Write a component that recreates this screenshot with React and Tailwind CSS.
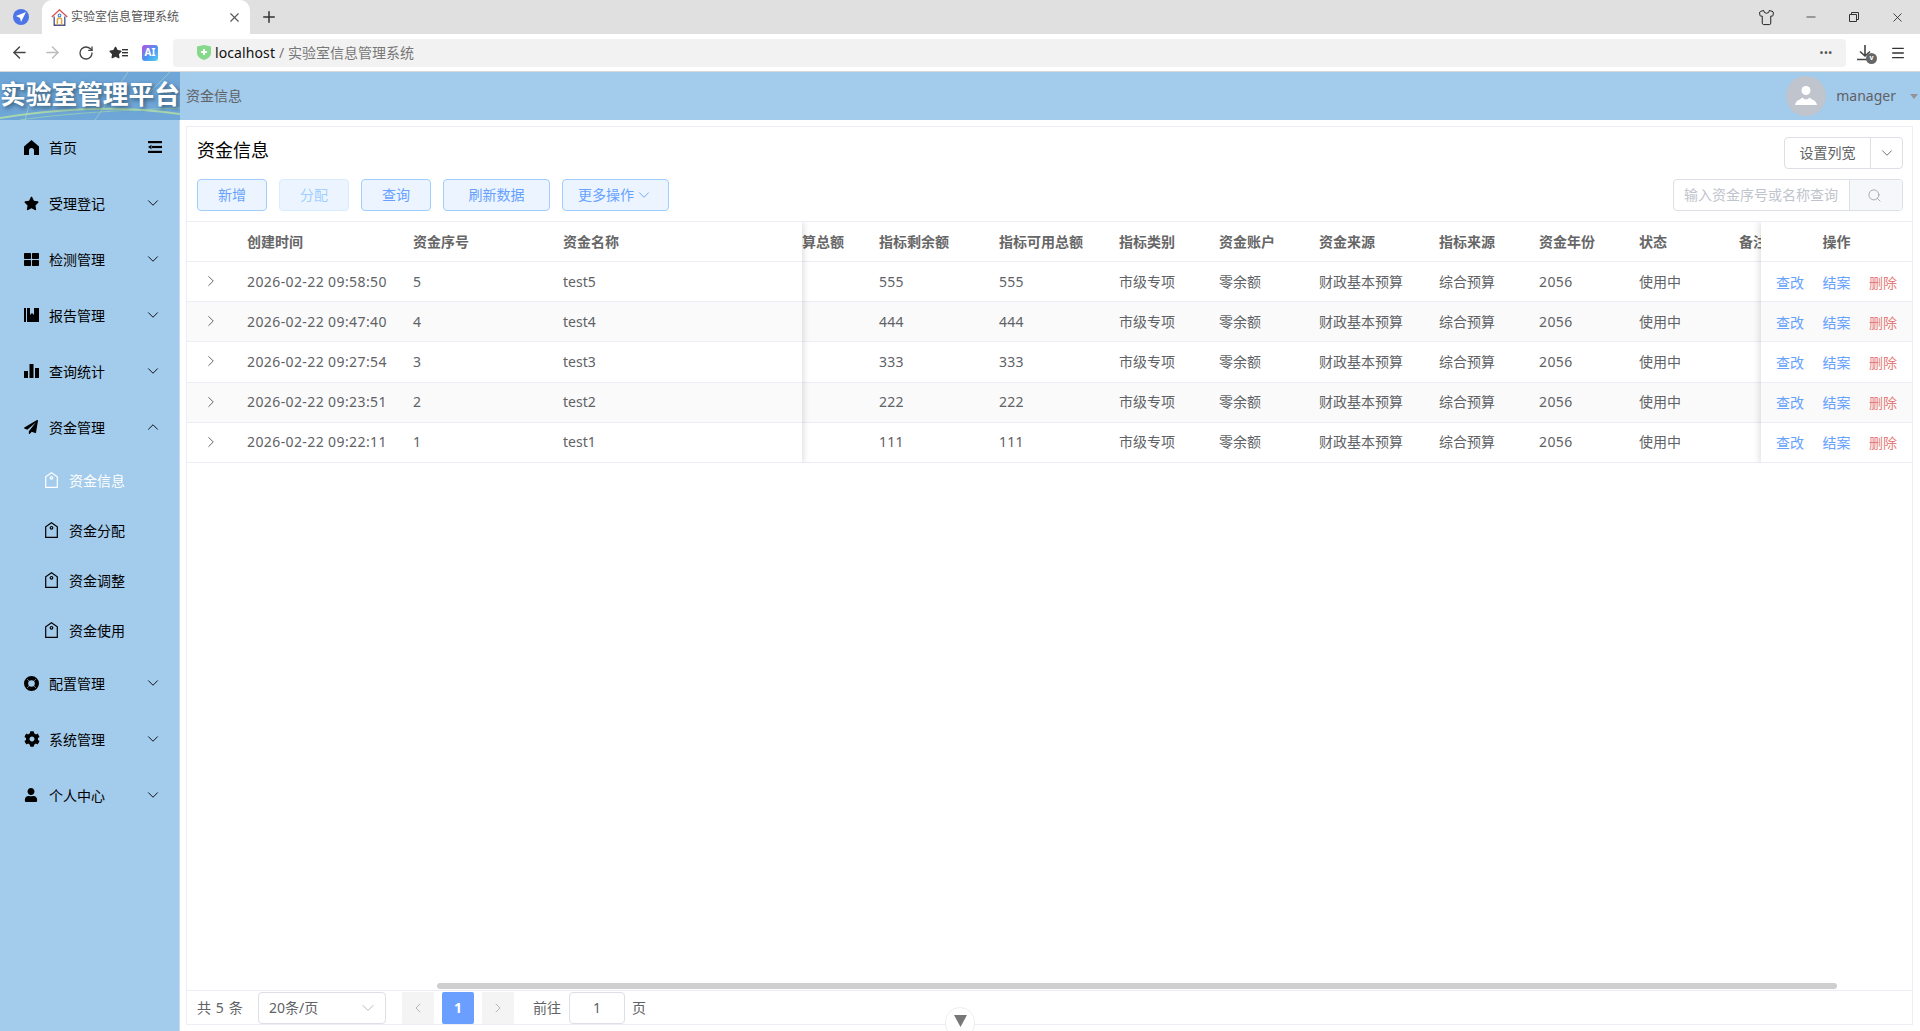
import React from 'react';
import { FaStar, FaThLarge, FaPaperPlane, FaCog, FaUser } from 'react-icons/fa';
import { ChevronDown, ChevronUp, ChevronRight, ChevronLeft, Search, X, Plus, ArrowLeft, ArrowRight, RotateCw, Minus, Menu, Shirt } from 'lucide-react';

const HomeIcon = () => (
    <svg width="15" height="15" viewBox="0 0 15 15" fill="currentColor">
        <path d="M7.500 0 15 6.500V15H10V10.500a2.500 2.500 0 0 0-5 0V15H0V6.500z" />
    </svg>
);

const OutdentIcon = () => (
    <svg width="14" height="12" viewBox="0 0 14 12" fill="currentColor">
        <rect x="0" y="0" width="14" height="2.200" />
        <rect x="4" y="4.900" width="10" height="2.200" />
        <path d="M0 6 3.500 3.800v4.400z" />
        <rect x="0" y="9.800" width="14" height="2.200" />
    </svg>
);

const RingIcon = () => (
    <svg width="15" height="15" viewBox="0 0 15 15" fill="none">
        <circle cx="7.500" cy="7.500" r="5.400" stroke="currentColor" strokeWidth="4.200" />
        <path d="M3 3 5 5M12 3 10 5M3 12 5 10M12 12 10 10" stroke="#5a7186" strokeWidth="1" />
    </svg>
);

const ReportIcon = () => (
    <svg width="15" height="14" viewBox="0 0 15 14" fill="currentColor">
        <rect x="0" y="0" width="2" height="14" />
        <path d="M3 0h3v7l2-2 2 2V0h5v14H3z" />
    </svg>
);

const BarsIcon = () => (
    <svg width="15" height="14" viewBox="0 0 15 14" fill="currentColor">
        <rect x="0" y="7" width="4" height="7" />
        <rect x="5.500" y="0" width="4" height="14" />
        <rect x="11" y="4" width="4" height="10" />
    </svg>
);

const TagIcon = ({ className }) => (
    <svg width="13" height="16" viewBox="0 0 13 16" fill="none" stroke="currentColor" strokeWidth="1.200" className={className}>
        <path d="M.7 15.300V4.800L6.500.8l5.800 4v10.500z" />
        <circle cx="6.500" cy="5.800" r="1.300" />
    </svg>
);

const HouseFavicon = () => (
    <svg width="17" height="17" viewBox="0 0 16 16" fill="none">
        <path d="M.7 7.500 8 .8l7.300 6.700" stroke="#d9534f" strokeWidth="1.300" />
        <path d="M3 7v8.300h10V7" stroke="#3f4f8f" strokeWidth="1.200" />
        <path d="M6 15.300v-4.800a2 2 0 0 1 4 0v4.800" stroke="#e8a33d" strokeWidth="1.400" />
        <circle cx="8" cy="6" r="1.300" stroke="#3f7fd0" strokeWidth="1" />
    </svg>
);

const menu = [
    { label: '受理登记', icon: <FaStar size={15} /> },
    { label: '检测管理', icon: <FaThLarge size={15} /> },
    { label: '报告管理', icon: <ReportIcon /> },
    { label: '查询统计', icon: <BarsIcon /> },
];

const menuAfter = [
    { label: '配置管理', icon: <RingIcon /> },
    { label: '系统管理', icon: <FaCog size={16} /> },
    { label: '个人中心', icon: <FaUser size={14} /> },
];

const subMenu = ['资金信息', '资金分配', '资金调整', '资金使用'];

const rows = [
    { time: '2026-02-22 09:58:50', no: '5', name: 'test5', left: '555', usable: '555' },
    { time: '2026-02-22 09:47:40', no: '4', name: 'test4', left: '444', usable: '444' },
    { time: '2026-02-22 09:27:54', no: '3', name: 'test3', left: '333', usable: '333' },
    { time: '2026-02-22 09:23:51', no: '2', name: 'test2', left: '222', usable: '222' },
    { time: '2026-02-22 09:22:11', no: '1', name: 'test1', left: '111', usable: '111' },
];

const headRow = 'flex h-[40px] items-center border-b border-[#ebeef5] pb-[1px] font-bold text-[#666]';
const bodyRow = 'flex h-[40.2px] items-center border-b border-[#ebeef5] pb-[1px] text-[#606266]';

const MenuItem = ({ icon, label, open }) => (
    <div className="flex h-[56px] items-center pb-[2px] pl-[24px] pr-[17px] text-black">
        <span className="flex w-[25px] shrink-0 items-center">{icon}</span>
        <span className="flex-1">{label}</span>
        {open ? <ChevronUp size={18} strokeWidth={1.200} /> : <ChevronDown size={18} strokeWidth={1.200} />}
    </div>
);

const Sidebar = () => (
    <aside className="w-[180px] shrink-0 border-r border-[#c9ddf2] bg-[#a3cbec] text-[14px]">
        <div className="flex h-[56px] items-center pb-[2px] pl-[24px] pr-[17px] text-black">
            <span className="flex w-[25px] shrink-0 items-center"><HomeIcon /></span>
            <span className="flex-1">首页</span>
            <OutdentIcon />
        </div>
        {menu.map((m) => <MenuItem key={m.label} {...m} />)}
        <MenuItem icon={<FaPaperPlane size={14} />} label="资金管理" open />
        {subMenu.map((s, i) => (
            <div key={s} className={`flex h-[50px] items-center pb-[2px] pl-[45px] ${i === 0 ? 'text-white' : 'text-black'}`}>
                <TagIcon className="mr-[11px]" />
                {s}
            </div>
        ))}
        {menuAfter.map((m) => <MenuItem key={m.label} {...m} />)}
    </aside>
);

const BrowserChrome = () => (
    <div className="shrink-0">
        <div className="flex h-[34px] items-center bg-[#e0e0e0]">
            <div className="flex w-[42px] justify-center">
                <span className="flex h-[16px] w-[16px] items-center justify-center rounded-full bg-[#4b74e6] text-white">
                    <svg width="10" height="10" viewBox="0 0 10 10" fill="currentColor"><path d="M10 0 0 4l4 2 1 4z" /></svg>
                </span>
            </div>
            <div className="flex h-[34px] w-[208px] items-center rounded-t-[10px] bg-white pl-[9px] pr-[8px] text-[12px] text-[#555]">
                <HouseFavicon />
                <span className="ml-[3px] flex-1">实验室信息管理系统</span>
                <X size={15} strokeWidth={1.800} />
            </div>
            <Plus size={18} strokeWidth={2} className="ml-[10px] text-[#333]" />
            <div className="flex-1" />
            <Shirt size={17} strokeWidth={1.400} className="text-[#222]" />
            <Minus size={14} strokeWidth={1.300} className="ml-[29px] text-[#222]" />
            <svg width="10" height="10" viewBox="0 0 10 10" fill="none" stroke="#333" className="ml-[31px]"><path d="M.5 2.500h7v7h-7zM2.500 2.500v-2h7v7h-2" /></svg>
            <X size={15} strokeWidth={1.300} className="ml-[31px] mr-[15px] text-[#222]" />
        </div>
        <div className="flex h-[38px] items-center border-b border-[#d8d8d8] bg-white">
            <ArrowLeft size={19} strokeWidth={1.800} className="ml-[10px] text-[#444]" />
            <ArrowRight size={19} strokeWidth={1.800} className="ml-[14px] text-[#bbb]" />
            <RotateCw size={16} strokeWidth={2} className="ml-[16px] text-[#444]" />
            <span className="ml-[15px] flex items-center text-[#333]">
                <FaStar size={13} />
                <svg width="6" height="8" viewBox="0 0 6 8" fill="currentColor"><rect y="0" width="6" height="1.400" /><rect y="3" width="6" height="1.400" /><rect y="6" width="6" height="1.400" /></svg>
            </span>
            <span className="ml-[14px] flex h-[16px] w-[16px] items-center justify-center rounded-[3px] bg-gradient-to-br from-[#b04ae0] via-[#4a8ef0] to-[#55d4f0] text-[10px] font-bold text-white">AI</span>
            <div className="ml-[15px] flex h-[28px] flex-1 items-center rounded-[4px] bg-[#f2f2f2] pb-[1px] pl-[24px] pr-[13px] text-[14px]">
                <svg width="14" height="15" viewBox="0 0 14 15"><path d="M0 1.500 7 0l7 1.500V8c0 3.500-3.500 6-7 7-3.500-1-7-3.500-7-7z" fill="#86d98a" /><path d="M7 4v6M4 7h6" stroke="#fff" strokeWidth="2" /></svg>
                <span className="ml-[4px] tracking-[0.1px] text-[#111]">localhost</span>
                <span className="ml-[4px] text-[#777]">/ 实验室信息管理系统</span>
                <div className="flex-1" />
                <span className="text-[9px] font-bold leading-none tracking-[1px] text-[#555]">•••</span>
            </div>
            <span className="relative ml-[11px] text-[#444]">
                <svg width="16" height="16" viewBox="0 0 16 16" fill="none" stroke="currentColor" strokeWidth="1.600"><path d="M8 0v11M3 6.500 8 11l5-4.500M0 14.500h13" /></svg>
                <span className="absolute -bottom-[3px] -right-[4px] flex h-[11px] w-[11px] items-center justify-center rounded-full bg-[#666] text-[7px] font-bold text-white">v</span>
            </span>
            <Menu size={16} strokeWidth={2} className="ml-[17px] mr-[14px] text-[#333]" />
        </div>
    </div>
);

const AppHeader = () => (
    <header className="flex h-[48px] shrink-0 items-center bg-[#a3cbec]">
        <div className="relative h-[48px] w-[180px] shrink-0 overflow-hidden bg-[#6fa6d8]">
            <svg className="absolute inset-0" width="180" height="48" viewBox="0 0 180 48" fill="none">
                <path d="M0 46C50 38 110 32 180 42" stroke="#b9e6a0" strokeWidth="2" opacity=".75" />
                <path d="M20 48C60 42 120 38 180 36" stroke="#a6e0a8" strokeWidth="1" opacity=".6" />
                <path d="M95 48 128 0M25 48 30 30M150 20 170 0" stroke="#b9e6c0" strokeWidth="1" opacity=".5" />
            </svg>
            <div className="absolute inset-0 flex items-center justify-center whitespace-nowrap pb-[2px] text-[25.700px] font-bold text-white [text-shadow:2px_2px_4px_rgba(40,70,90,0.8)]">实验室管理平台</div>
        </div>
        <span className="ml-[6px] pb-[2px] text-[14px] text-[#606266]">资金信息</span>
        <div className="flex-1" />
        <span className="flex h-[40px] w-[40px] items-center justify-center rounded-full bg-[#c0c4cc] text-white">
            <svg width="24" height="24" viewBox="0 0 24 24" fill="currentColor"><circle cx="12" cy="6.500" r="4.500" /><path d="M1 21c1-5 5-5 7.500-7.500 2 2.500 5 2.500 7 0C18 16 22 16 23 21z" /></svg>
        </span>
        <span className="ml-[10px] pb-[2px] text-[14px] text-[#606266]">manager</span>
        <span className="ml-[14px] mr-[2px] h-0 w-0 border-x-[4px] border-t-[5px] border-x-transparent border-t-[#909399]" />
    </header>
);

const ToolButton = ({ children, disabled, className = '' }) => (
    <button className={`flex h-[32px] items-center justify-center rounded-[4px] border pb-[1px] ${disabled ? 'border-[#d9ecff] bg-[#ecf5ff] text-[#a0cfff]' : 'border-[#a0cfff] bg-[#ecf5ff] text-[#67a1ff]'} ${className}`}>
        {children}
    </button>
);

const FundTable = () => (
    <div className="flex flex-1 flex-col">
        <div className="flex overflow-hidden border-t border-[#ebeef5]">
            {/* left fixed columns */}
            <div className="z-10 w-[615px] shrink-0 bg-white shadow-[2px_0_6px_rgba(0,0,0,0.12)]">
                <div className={headRow}>
                    <span className="w-[60px]" />
                    <span className="w-[166px]">创建时间</span>
                    <span className="w-[150px]">资金序号</span>
                    <span>资金名称</span>
                </div>
                {rows.map((r, i) => (
                    <div key={r.no} className={`${bodyRow} ${i % 2 ? 'bg-[#fafafa]' : ''}`}>
                        <span className="flex w-[60px] pl-[15px] text-[#555]"><ChevronRight size={18} strokeWidth={1.200} /></span>
                        <span className="w-[166px] tracking-[0.4px]">{r.time}</span>
                        <span className="w-[150px]">{r.no}</span>
                        <span>{r.name}</span>
                    </div>
                ))}
            </div>

            {/* scrolled columns */}
            <div className="min-w-0 flex-1 overflow-hidden">
                <div className="-ml-[14px] w-[1100px]">
                    <div className={headRow}>
                        <span className="w-[91px]">预算总额</span>
                        <span className="w-[120px]">指标剩余额</span>
                        <span className="w-[120px]">指标可用总额</span>
                        <span className="w-[100px]">指标类别</span>
                        <span className="w-[100px]">资金账户</span>
                        <span className="w-[120px]">资金来源</span>
                        <span className="w-[100px]">指标来源</span>
                        <span className="w-[100px]">资金年份</span>
                        <span className="w-[100px]">状态</span>
                        <span>备注</span>
                    </div>
                    {rows.map((r, i) => (
                        <div key={r.no} className={`${bodyRow} ${i % 2 ? 'bg-[#fafafa]' : ''}`}>
                            <span className="w-[91px]" />
                            <span className="w-[120px] tracking-[0.3px]">{r.left}</span>
                            <span className="w-[120px] tracking-[0.3px]">{r.usable}</span>
                            <span className="w-[100px]">市级专项</span>
                            <span className="w-[100px]">零余额</span>
                            <span className="w-[120px]">财政基本预算</span>
                            <span className="w-[100px]">综合预算</span>
                            <span className="w-[100px] tracking-[0.4px]">2056</span>
                            <span className="w-[100px]">使用中</span>
                        </div>
                    ))}
                </div>
            </div>

            {/* right fixed column */}
            <div className="z-10 w-[151px] shrink-0 bg-white shadow-[-2px_0_6px_rgba(0,0,0,0.12)]">
                <div className={`${headRow} justify-center`}>操作</div>
                {rows.map((r, i) => (
                    <div key={r.no} className={`${bodyRow} gap-[18.500px] pl-[15px] pt-[2px] ${i % 2 ? 'bg-[#fafafa]' : ''}`}>
                        <span className="text-[#67a1ff]">查改</span>
                        <span className="text-[#67a1ff]">结案</span>
                        <span className="text-[#e67a7a]">删除</span>
                    </div>
                ))}
            </div>
        </div>

        <div className="mb-[1px] mr-[75px] mt-auto h-[6px] w-[1400px] self-end rounded-full bg-[#cfcfcf]" />
    </div>
);

const Pager = () => (
    <div className="flex h-[34px] shrink-0 items-center border-t border-[#ebeef5] pl-[10px] text-[#606266]">
        <span className="w-[61px] pb-[1px] tracking-[0.6px]">共 5 条</span>
        <div className="flex h-[32px] w-[128px] items-center justify-between rounded-[4px] border border-[#dcdfe6] pl-[10px] pr-[7px]">
            <span className="pb-[1px]">20条/页</span>
            <ChevronDown size={20} strokeWidth={1} className="text-[#a8abb2]" />
        </div>
        <span className="ml-[16px] flex h-[32px] w-[32px] items-center justify-center rounded-[2px] bg-[#f4f4f5] text-[#a8abb2]"><ChevronLeft size={16} strokeWidth={1.300} /></span>
        <span className="ml-[8px] flex h-[32px] w-[32px] items-center justify-center rounded-[2px] bg-[#6a9fff] font-bold text-white">1</span>
        <span className="ml-[8px] flex h-[32px] w-[32px] items-center justify-center rounded-[2px] bg-[#f4f4f5] text-[#a8abb2]"><ChevronRight size={16} strokeWidth={1.300} /></span>
        <span className="ml-[19px] pb-[1px]">前往</span>
        <span className="ml-[8px] flex h-[32px] w-[56px] items-center justify-center rounded-[4px] border border-[#dcdfe6]">1</span>
        <span className="ml-[7px] pb-[1px]">页</span>
    </div>
);

export default function App() {
    return (
        <div className="relative flex h-[1031px] w-[1920px] flex-col overflow-hidden bg-white text-[14px] font-['Noto_Sans','Noto_Sans_CJK_SC',sans-serif]">
            <BrowserChrome />
            <AppHeader />
            <div className="flex min-h-0 flex-1">
                <Sidebar />
                <main className="flex min-w-0 flex-1 flex-col pb-[6px] pl-[6px] pr-[7px] pt-[6px]">
                    <div className="flex min-h-0 flex-1 flex-col border border-[#ebeef5] bg-white">
                        <div className="flex shrink-0 justify-between pl-[10px] pr-[9px] pt-[10px]">
                            <h1 className="text-[18px] font-normal leading-[26px] text-black">资金信息</h1>
                            <div className="flex h-[32px] w-[119px] rounded-[4px] border border-[#dcdfe6] text-[#606266]">
                                <span className="flex flex-1 items-center justify-center border-r border-[#dcdfe6] pb-[1px]">设置列宽</span>
                                <span className="flex w-[31px] items-center justify-center"><ChevronDown size={18} strokeWidth={1.200} /></span>
                            </div>
                        </div>
                        <div className="flex shrink-0 items-center gap-[12px] pb-[10px] pl-[10px] pr-[9px] pt-[10px]">
                            <ToolButton className="w-[70px]">新增</ToolButton>
                            <ToolButton disabled className="w-[70px]">分配</ToolButton>
                            <ToolButton className="w-[70px]">查询</ToolButton>
                            <ToolButton className="w-[107px]">刷新数据</ToolButton>
                            <ToolButton className="w-[107px] gap-[1px]">更多操作 <ChevronDown size={18} strokeWidth={1.200} /></ToolButton>
                            <div className="ml-auto flex h-[32px] w-[230px] rounded-[4px] border border-[#dcdfe6]">
                                <span className="flex flex-1 items-center border-r border-[#dcdfe6] pb-[1px] pl-[10px] text-[#c0c4cc]">输入资金序号或名称查询</span>
                                <span className="flex w-[52px] items-center justify-center rounded-r-[4px] bg-[#f5f7fa] pr-[4px] text-[#909399]"><Search size={15} strokeWidth={1.200} /></span>
                            </div>
                        </div>
                        <FundTable />
                        <Pager />
                    </div>
                </main>
            </div>

            {/* vue devtools handle */}
            <div className="absolute bottom-[-8px] left-[945px] flex h-[32px] w-[30px] items-start justify-center rounded-full border border-[#eee] bg-white pt-[7px]">
                <svg width="13" height="12" viewBox="0 0 13 12"><path d="M0 0h13L6.500 12z" fill="#777" /></svg>
            </div>
        </div>
    );
}
